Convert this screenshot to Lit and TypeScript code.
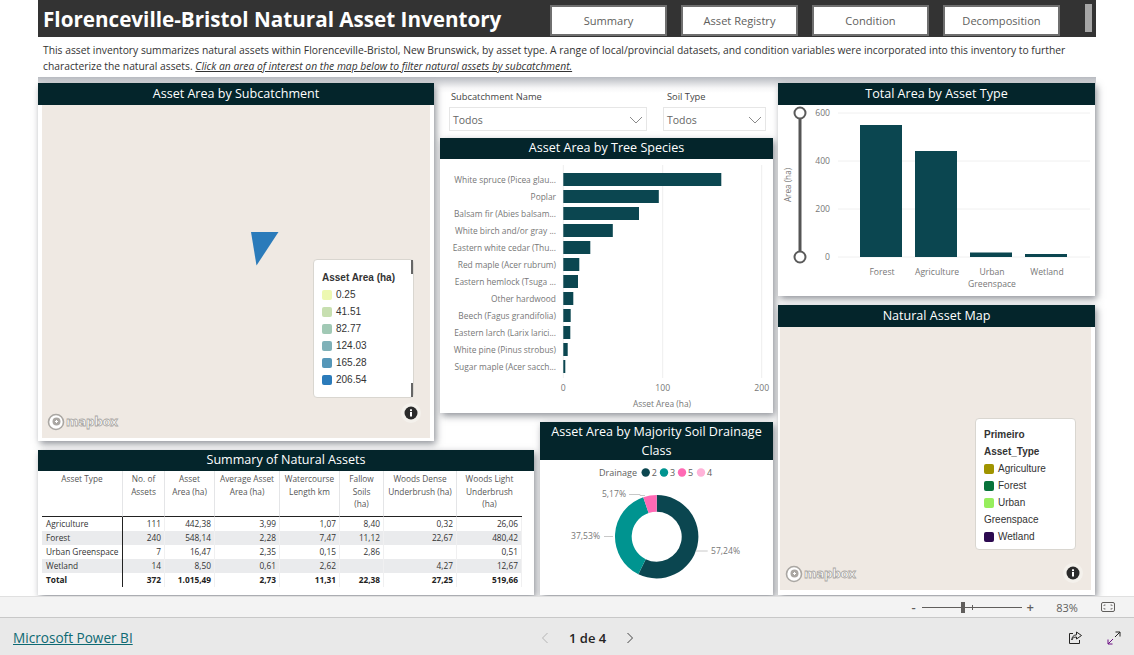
import { LitElement, html, css, svg } from 'lit';
import { customElement } from 'lit/decorators.js';

const TEAL = '#0b4650';

const tabs = ['Summary', 'Asset Registry', 'Condition', 'Decomposition'];

const species: [string, number][] = [
  ['White spruce (Picea glau...', 158],
  ['Poplar', 95.5],
  ['Balsam fir (Abies balsam...', 75.7],
  ['White birch and/or gray ...', 49.5],
  ['Eastern white cedar (Thu...', 27],
  ['Red maple (Acer rubrum)', 16],
  ['Eastern hemlock (Tsuga ...', 14.7],
  ['Other hardwood', 10],
  ['Beech (Fagus grandifolia)', 7.4],
  ['Eastern larch (Larix larici...', 7],
  ['White pine (Pinus strobus)', 4.4],
  ['Sugar maple (Acer sacch...', 2],
];

const assetTypes = [
  { x: 82, w: 42, top: 42, label: ['Forest'] },
  { x: 137, w: 42, top: 68, label: ['Agriculture'] },
  { x: 192, w: 42, top: 169.5, label: ['Urban', 'Greenspace'] },
  { x: 247, w: 42, top: 171, label: ['Wetland'] },
];

const tableHead = [
  ['Asset Type'],
  ['No. of', 'Assets'],
  ['Asset', 'Area (ha)'],
  ['Average Asset', 'Area (ha)'],
  ['Watercourse', 'Length km'],
  ['Fallow', 'Soils', '(ha)'],
  ['Woods Dense', 'Underbrush (ha)'],
  ['Woods Light', 'Underbrush', '(ha)'],
];

const tableRows = [
  ['Agriculture', '111', '442,38', '3,99', '1,07', '8,40', '0,32', '26,06'],
  ['Forest', '240', '548,14', '2,28', '7,47', '11,12', '22,67', '480,42'],
  ['Urban Greenspace', '7', '16,47', '2,35', '0,15', '2,86', '', '0,51'],
  ['Wetland', '14', '8,50', '0,61', '2,62', '', '4,27', '12,67'],
];
const tableTotal = ['Total', '372', '1.015,49', '2,73', '11,31', '22,38', '27,25', '519,66'];

const areaLegend = [
  ['#edf8b1', '0.25'],
  ['#c7dfb0', '41.51'],
  ['#a1c9b5', '82.77'],
  ['#7fb1b8', '124.03'],
  ['#5597b8', '165.28'],
  ['#2b7bba', '206.54'],
];

const typeLegend = [
  ['#a09400', 'Agriculture'],
  ['#08733a', 'Forest'],
  ['#97ee5c', 'Urban'],
  ['', 'Greenspace'],
  ['#2c0a50', 'Wetland'],
];

function arc(cx: number, cy: number, r: number, r2: number, from: number, to: number) {
  const pt = (rad: number, pct: number) => {
    const a = (pct / 100) * Math.PI * 2 - Math.PI / 2;
    return `${(cx + rad * Math.cos(a)).toFixed(2)} ${(cy + rad * Math.sin(a)).toFixed(2)}`;
  };
  const large = to - from > 50 ? 1 : 0;
  return `M${pt(r, from)}A${r} ${r} 0 ${large} 1 ${pt(r, to)}L${pt(r2, to)}A${r2} ${r2} 0 ${large} 0 ${pt(r2, from)}Z`;
}

const chevron = html`<svg class="chev" width="14" height="8" viewBox="0 0 14 8"><path d="M1 1l6 6 6-6" fill="none" stroke="#8a8a8a" stroke-width="1"/></svg>`;

const infoIcon = html`<svg class="info" width="20" height="20" viewBox="0 0 20 20">
  <circle cx="10" cy="10" r="10" fill="#f4f1ec"/>
  <circle cx="10" cy="10" r="6.5" fill="#2b2b2b"/>
  <rect x="9" y="9" width="2" height="4.5" fill="#fff"/>
  <rect x="9" y="6.3" width="2" height="1.8" fill="#fff"/>
</svg>`;

const mapboxLogo = html`<div class="mapbox">
  <svg width="18" height="18" viewBox="0 0 18 18">
    <circle cx="9" cy="9" r="7.5" fill="#fff" stroke="#aaa7a3" stroke-width="1.6"/>
    <circle cx="9.5" cy="8.5" r="4" fill="#aaa7a3"/>
    <path d="M8 8.5h3M9.5 7v3" stroke="#fff" stroke-width="1"/>
  </svg>
  <span>mapbox</span>
</div>`;

@customElement('app-root')
export class AppRoot extends LitElement {
  static styles = css`
    :host {
      display: flex;
      flex-direction: column;
      height: 100vh;
      width: 100%;
      overflow: hidden;
      background: #fff;
      font-family: 'Open Sans', 'Noto Sans', sans-serif;
      color: #333;
    }
    .main {
      flex: 1;
      min-height: 0;
      overflow: hidden;
      padding-left: 38px;
    }
    .page {
      width: 1058px;
    }
    .topbar {
      height: 37px;
      background: #333;
      display: flex;
      align-items: flex-start;
    }
    .topbar h1 {
      margin: 0;
      padding: 4px 0 0 5px;
      width: 512px;
      box-sizing: border-box;
      font-size: 20.65px;
      line-height: 30px;
      font-weight: 700;
      color: #fff;
      white-space: nowrap;
    }
    .tabs {
      display: flex;
      gap: 14px;
      padding-top: 5px;
    }
    .tab {
      width: 117px;
      height: 31px;
      box-sizing: border-box;
      border: 2px solid #6f6f6f;
      outline: 1px solid #fff;
      outline-offset: -3px;
      background: #fff;
      color: #605e5c;
      font-size: 11.1px;
      display: flex;
      align-items: center;
      justify-content: center;
    }
    .thumb {
      margin: 4px 0 0 25px;
      width: 7px;
      height: 28px;
      background: #a6a6a6;
    }
    .desc {
      margin: 0;
      padding: 5px 0 0 5px;
      height: 40px;
      box-sizing: border-box;
      font-size: 10.3px;
      line-height: 16px;
      color: #333;
      white-space: nowrap;
    }
    .desc em {
      text-decoration: underline;
    }
    .canvas {
      display: grid;
      grid-template-columns: 396px 6px 94px 6px 233px 5px 317px;
      grid-template-rows: 50px 5px 275px 9px 19px 9px 145px;
      padding-top: 6px;
      background: linear-gradient(#b8bbc1, #f6f6f7 11px, #fff 16px);
    }
    .visual {
      background: #fff;
      box-shadow: 2px 3px 7px rgba(70, 75, 85, 0.6);
      display: flex;
      flex-direction: column;
      min-height: 0;
    }
    .vh {
      background: #04252b;
      color: #fff;
      text-align: center;
      font-size: 12.55px;
      line-height: 22px;
      flex: none;
    }
    .v-map {
      grid-column: 1 / 2;
      grid-row: 1 / 6;
    }
    .filters {
      grid-column: 3 / 6;
      grid-row: 1 / 2;
      display: flex;
      gap: 16px;
      padding: 7px 7px 0 9px;
    }
    .v-tree {
      grid-column: 3 / 6;
      grid-row: 3 / 4;
    }
    .v-tree .vh,
    .v-table .vh {
      line-height: 19px;
      padding-bottom: 2px;
    }
    .v-donut {
      grid-column: 5 / 6;
      grid-row: 5 / 8;
    }
    .v-donut .vh {
      line-height: 19px;
      padding: 0 4px;
    }
    .v-table {
      grid-column: 1 / 4;
      grid-row: 7 / 8;
    }
    .right {
      grid-column: 7 / 8;
      grid-row: 1 / 8;
      display: flex;
      flex-direction: column;
      gap: 9px;
    }
    .v-total {
      height: 213px;
      flex: none;
    }
    .v-natural {
      flex: 1;
    }
    .mapbody {
      flex: 1;
      margin: 0 4px 3px;
      background: #efe9e3;
      position: relative;
    }
    .v-natural .mapbody {
      margin: 0 4px 5px 2px;
    }
    .triangle {
      position: absolute;
      left: 209px;
      top: 127px;
    }
    .legend {
      position: absolute;
      box-sizing: border-box;
      background: #fff;
      border: 1px solid #d9d6d0;
      border-radius: 4px;
      font-family: 'Liberation Sans', Arial, sans-serif;
      font-size: 10px;
      color: #333;
    }
    .legend.area {
      left: 271px;
      top: 154px;
      width: 101px;
      height: 139px;
      padding: 9px 8px;
    }
    .legend.area::before,
    .legend.area::after {
      content: '';
      position: absolute;
      right: 0;
      width: 2px;
      height: 14px;
      background: #666;
    }
    .legend.area::before {
      top: 0;
    }
    .legend.area::after {
      bottom: 0;
    }
    .legend.types {
      left: 195px;
      top: 91px;
      width: 101px;
      height: 132px;
      padding: 7px 8px;
    }
    .legend b {
      display: block;
      font-weight: 700;
      line-height: 17px;
      white-space: nowrap;
    }
    .litem {
      display: flex;
      align-items: center;
      gap: 4px;
      height: 17px;
    }
    .swatch {
      width: 10px;
      height: 10px;
      border-radius: 2px;
      flex: none;
    }
    .mapbox {
      position: absolute;
      left: 5px;
      bottom: 7px;
      display: flex;
      align-items: center;
      gap: 1px;
    }
    .mapbox span {
      font-family: 'DejaVu Sans', sans-serif;
      font-weight: 700;
      font-size: 12px;
      letter-spacing: -0.35px;
      color: #fff;
      -webkit-text-stroke: 0.8px #aaa7a3;
      line-height: 18px;
    }
    .info {
      position: absolute;
      right: 9px;
      bottom: 15px;
    }
    .v-natural .info {
      right: 8px;
      bottom: 7px;
    }
    .filter {
      display: flex;
      flex-direction: column;
      gap: 3px;
      font-size: 9.3px;
      color: #444;
    }
    .filter label {
      padding-left: 2px;
      line-height: 14px;
    }
    .f2 label {
      padding-left: 4px;
    }
    .select {
      height: 24px;
      box-sizing: border-box;
      border: 1px solid #e6e6e6;
      display: flex;
      align-items: center;
      justify-content: space-between;
      padding: 2px 3px 0;
      font-size: 10.5px;
      color: #666;
    }
    .f1 {
      width: 198px;
    }
    .f2 {
      width: 103px;
    }
    svg text {
      font-family: 'Open Sans', 'Noto Sans', sans-serif;
    }
    .chart {
      display: block;
    }
    .grid {
      display: grid;
      grid-template-columns: 81px 42px 50px 65px 60px 44px 73px 65px;
      margin-left: 4px;
      font-size: 8.3px;
      color: #333;
    }
    .row {
      display: contents;
    }
    .th {
      height: 46px;
      box-sizing: border-box;
      padding: 2px 3px 0;
      text-align: center;
      line-height: 12.5px;
      color: #555;
      border-right: 1px solid #e4e5e7;
      border-bottom: 1px solid #222;
      white-space: nowrap;
    }
    .th:last-child {
      border-right: 0;
    }
    .th span {
      display: block;
    }
    .td {
      height: 14px;
      box-sizing: border-box;
      line-height: 14px;
      padding: 0 3px;
      text-align: right;
      border-right: 1px solid #f0f0f1;
      white-space: nowrap;
    }
    .td:first-child {
      text-align: left;
      padding-left: 4px;
      border-right: 1px solid #222;
    }
    .shade .td {
      background: #eaebed;
    }
    .total .td {
      font-weight: 700;
      color: #222;
    }
    .zoombar {
      height: 22px;
      flex: none;
      box-sizing: border-box;
      background: #f3f3f3;
      border-top: 1px solid #e0e0e0;
      border-bottom: 1px solid #c8c8c8;
      display: flex;
      align-items: center;
      justify-content: flex-end;
      color: #605e5c;
    }
    .zminus,
    .zplus {
      font-size: 13px;
      font-weight: 600;
      line-height: 16px;
    }
    .zoomtrack {
      width: 100px;
      height: 1px;
      background: #605e5c;
      margin: 0 5px 0 6px;
      position: relative;
    }
    .zoomtrack i {
      position: absolute;
      left: 39px;
      top: -5px;
      width: 4px;
      height: 11px;
      background: #605e5c;
    }
    .zoomtrack u {
      position: absolute;
      left: 50px;
      top: -2px;
      width: 1px;
      height: 5px;
      background: #605e5c;
    }
    .zpct {
      font-size: 11px;
      margin-left: 21px;
      width: 24px;
      text-align: center;
    }
    .zfit {
      margin: 0 19px 0 22px;
      display: block;
    }
    .footer {
      height: 37px;
      flex: none;
      box-sizing: border-box;
      background: #e9e9e9;
      display: flex;
      align-items: center;
      position: relative;
      padding: 2px 13px 0;
    }
    .footer a {
      color: #0e6a73;
      font-size: 13.6px;
      text-decoration: underline;
    }
    .pager {
      position: absolute;
      left: 540px;
      display: flex;
      align-items: center;
      gap: 19px;
      font-size: 13px;
      font-weight: 600;
      color: #252423;
    }
    .actions {
      margin-left: auto;
      display: flex;
      gap: 24px;
      align-items: center;
    }
  `;

  private visualHeader(title: string) {
    return html`<div class="vh">${title}</div>`;
  }

  private renderTree() {
    // scale: about 0.995px per hectare, zero line at x=123 inside this svg
    const x0 = 123.3;
    return svg`<svg class="chart" width="333" height="254" viewBox="0 0 333 254">
      ${[123.3, 222.7, 321.7].map(
        (x) => svg`<line x1=${x} x2=${x} y1="6" y2="219" stroke="#eeeeee"/>`
      )}
      ${species.map(([name, v], i) => {
        const y = 14 + i * 17;
        return svg`
          <rect x=${x0} y=${y} width=${v} height="13" fill=${TEAL}/>
          <text x="116" y=${y + 10} text-anchor="end" font-size="8.4" fill="#777">${name}</text>`;
      })}
      ${[
        [123.3, '0'],
        [222.7, '100'],
        [321.7, '200'],
      ].map(
        ([x, t]) => svg`<text x=${x} y="232" text-anchor="middle" font-size="8.6" fill="#777">${t}</text>`
      )}
      <text x="222" y="248" text-anchor="middle" font-size="8.4" fill="#777">Asset Area (ha)</text>
    </svg>`;
  }

  private renderColumns() {
    // svg origin is x=778, y=105 on the page
    const yFor = [8, 56, 104, 152];
    const ticks = ['600', '400', '200', '0'];
    return svg`<svg class="chart" width="317" height="191" viewBox="0 0 317 191">
      ${yFor.map(
        (y, i) => svg`
          <line x1="60" x2="312" y1=${y} y2=${y} stroke="#f0f0f0"/>
          <text x="52" y=${y + 3} text-anchor="end" font-size="8.6" fill="#777">${ticks[i]}</text>`
      )}
      ${assetTypes.map(
        (b) => svg`
          <rect x=${b.x} y=${b.top - 22} width=${b.w} height=${152 - (b.top - 22)} fill=${TEAL}/>
          ${b.label.map(
            (l, i) => svg`<text x=${b.x + 22} y=${170 + i * 12} text-anchor="middle" font-size="8.6" fill="#777">${l}</text>`
          )}`
      )}
      <line x1="22" x2="22" y1="8" y2="152" stroke="#555" stroke-width="3"/>
      <circle cx="22" cy="8" r="5.5" fill="#fff" stroke="#5a5a5a" stroke-width="2"/>
      <circle cx="22" cy="152" r="5.5" fill="#fff" stroke="#5a5a5a" stroke-width="2"/>
      <text transform="translate(13 80) rotate(-90)" text-anchor="middle" font-size="8.2" fill="#777">Area (ha)</text>
    </svg>`;
  }

  private renderDonut() {
    const cx = 116.7;
    const cy = 76.7;
    const legend: [number, string, string][] = [
      [105.7, '#0b4650', '2'],
      [124, '#009490', '3'],
      [142, '#ff69b4', '5'],
      [161, '#ffb3d9', '4'],
    ];
    return svg`<svg class="chart" width="233" height="135" viewBox="0 0 233 135">
      <text x="59" y="16" font-size="9" fill="#605e5c">Drainage</text>
      ${legend.map(
        ([x, c, t]) => svg`
          <circle cx=${x} cy="12.5" r="4.2" fill=${c}/>
          <text x=${x + 6} y="16" font-size="9" fill="#605e5c">${t}</text>`
      )}
      <path d=${arc(cx, cy, 41.7, 25, 0, 57.24)} fill="#0b4650"/>
      <path d=${arc(cx, cy, 41.7, 25, 57.24, 94.77)} fill="#009490"/>
      <path d=${arc(cx, cy, 41.7, 25, 94.77, 100)} fill="#ff69b4"/>
      <path d="M155.7 91h12M105 35.5h-5v-1h-11M73 76.5h-9" fill="none" stroke="#c8c8c8"/>
      <text x="171" y="94" font-size="8.6" fill="#777">57,24%</text>
      <text x="60" y="79" text-anchor="end" font-size="8.6" fill="#777">37,53%</text>
      <text x="86" y="37" text-anchor="end" font-size="8.6" fill="#777">5,17%</text>
    </svg>`;
  }

  private renderTable() {
    return html`<div class="grid">
      <div class="row">
        ${tableHead.map((lines) => html`<div class="th">${lines.map((l) => html`<span>${l}</span>`)}</div>`)}
      </div>
      ${tableRows.map(
        (r, i) => html`<div class="row ${i % 2 ? 'shade' : ''}">${r.map((c) => html`<div class="td">${c}</div>`)}</div>`
      )}
      <div class="row total">${tableTotal.map((c) => html`<div class="td">${c}</div>`)}</div>
    </div>`;
  }

  render() {
    return html`
      <div class="main">
        <div class="page">
          <div class="topbar">
            <h1>Florenceville-Bristol Natural Asset Inventory</h1>
            <div class="tabs">${tabs.map((t) => html`<div class="tab">${t}</div>`)}</div>
            <div class="thumb"></div>
          </div>
          <p class="desc">
            This asset inventory summarizes natural assets within Florenceville-Bristol, New Brunswick, by asset type. A range of local/provincial datasets, and condition variables were incorporated into this inventory to further<br />
            characterize the natural assets. <em>Click an area of interest on the map below to filter natural assets by subcatchment.</em>
          </p>
          <div class="canvas">
            <section class="visual v-map">
              ${this.visualHeader('Asset Area by Subcatchment')}
              <div class="mapbody">
                <svg class="triangle" width="28" height="34" viewBox="0 0 28 34"><path d="M0 0H27.5L5.5 33.5Z" fill="#2b7bba"/></svg>
                <div class="legend area">
                  <b>Asset Area (ha)</b>
                  ${areaLegend.map(
                    ([c, t]) => html`<div class="litem"><span class="swatch" style="background:${c}"></span>${t}</div>`
                  )}
                </div>
                ${mapboxLogo}${infoIcon}
              </div>
            </section>

            <div class="filters">
              <div class="filter f1">
                <label>Subcatchment Name</label>
                <div class="select">Todos ${chevron}</div>
              </div>
              <div class="filter f2">
                <label>Soil Type</label>
                <div class="select">Todos ${chevron}</div>
              </div>
            </div>

            <section class="visual v-tree">
              ${this.visualHeader('Asset Area by Tree Species')}
              ${this.renderTree()}
            </section>

            <section class="visual v-table">
              ${this.visualHeader('Summary of Natural Assets')}
              ${this.renderTable()}
            </section>

            <section class="visual v-donut">
              ${this.visualHeader('Asset Area by Majority Soil Drainage Class')}
              ${this.renderDonut()}
            </section>

            <div class="right">
              <section class="visual v-total">
                ${this.visualHeader('Total Area by Asset Type')}
                ${this.renderColumns()}
              </section>
              <section class="visual v-natural">
                ${this.visualHeader('Natural Asset Map')}
                <div class="mapbody">
                  <div class="legend types">
                    <b>Primeiro</b>
                    <b>Asset_Type</b>
                    ${typeLegend.map(
                      ([c, t]) => html`<div class="litem">${c ? html`<span class="swatch" style="background:${c}"></span>` : ''}${t}</div>`
                    )}
                  </div>
                  ${mapboxLogo}${infoIcon}
                </div>
              </section>
            </div>
          </div>
        </div>
      </div>

      <div class="zoombar">
        <span class="zminus">-</span>
        <div class="zoomtrack"><i></i><u></u></div>
        <span class="zplus">+</span>
        <span class="zpct">83%</span>
        <svg class="zfit" width="14" height="10" viewBox="0 0 14 10" fill="none" stroke="#605e5c">
          <rect x="0.5" y="0.5" width="13" height="9" rx="1.5"/>
          <path d="M3 4V3h1.5M11 4V3H9.5M3 6v1h1.5M11 6v1H9.5" stroke-width="0.8"/>
        </svg>
      </div>

      <div class="footer">
        <a href="#">Microsoft Power BI</a>
        <div class="pager">
          <svg width="10" height="12" viewBox="0 0 10 12"><path d="M7.5 1L2.5 6l5 5" fill="none" stroke="#b5b5b5"/></svg>
          <span>1 de 4</span>
          <svg width="10" height="12" viewBox="0 0 10 12"><path d="M2.5 1l5 5-5 5" fill="none" stroke="#444"/></svg>
        </div>
        <div class="actions">
          <svg width="15" height="14" viewBox="0 0 15 14" fill="none" stroke="#252423">
            <path d="M5 2.5H1.5v10h10V9"/>
            <path d="M8.5 1l5 3.5-5 3.5V6C6 6 4.5 7 3.8 9c0-3 1.7-5 4.7-5.2z"/>
          </svg>
          <svg width="14" height="14" viewBox="0 0 14 14" fill="none">
            <path d="M13 1L8 6M13 1H8.5M13 1v4.5" stroke="#252423"/>
            <path d="M1 13l5-5M1 13h4.5M1 13V8.5" stroke="#6a0d83"/>
          </svg>
        </div>
      </div>
    `;
  }
}
